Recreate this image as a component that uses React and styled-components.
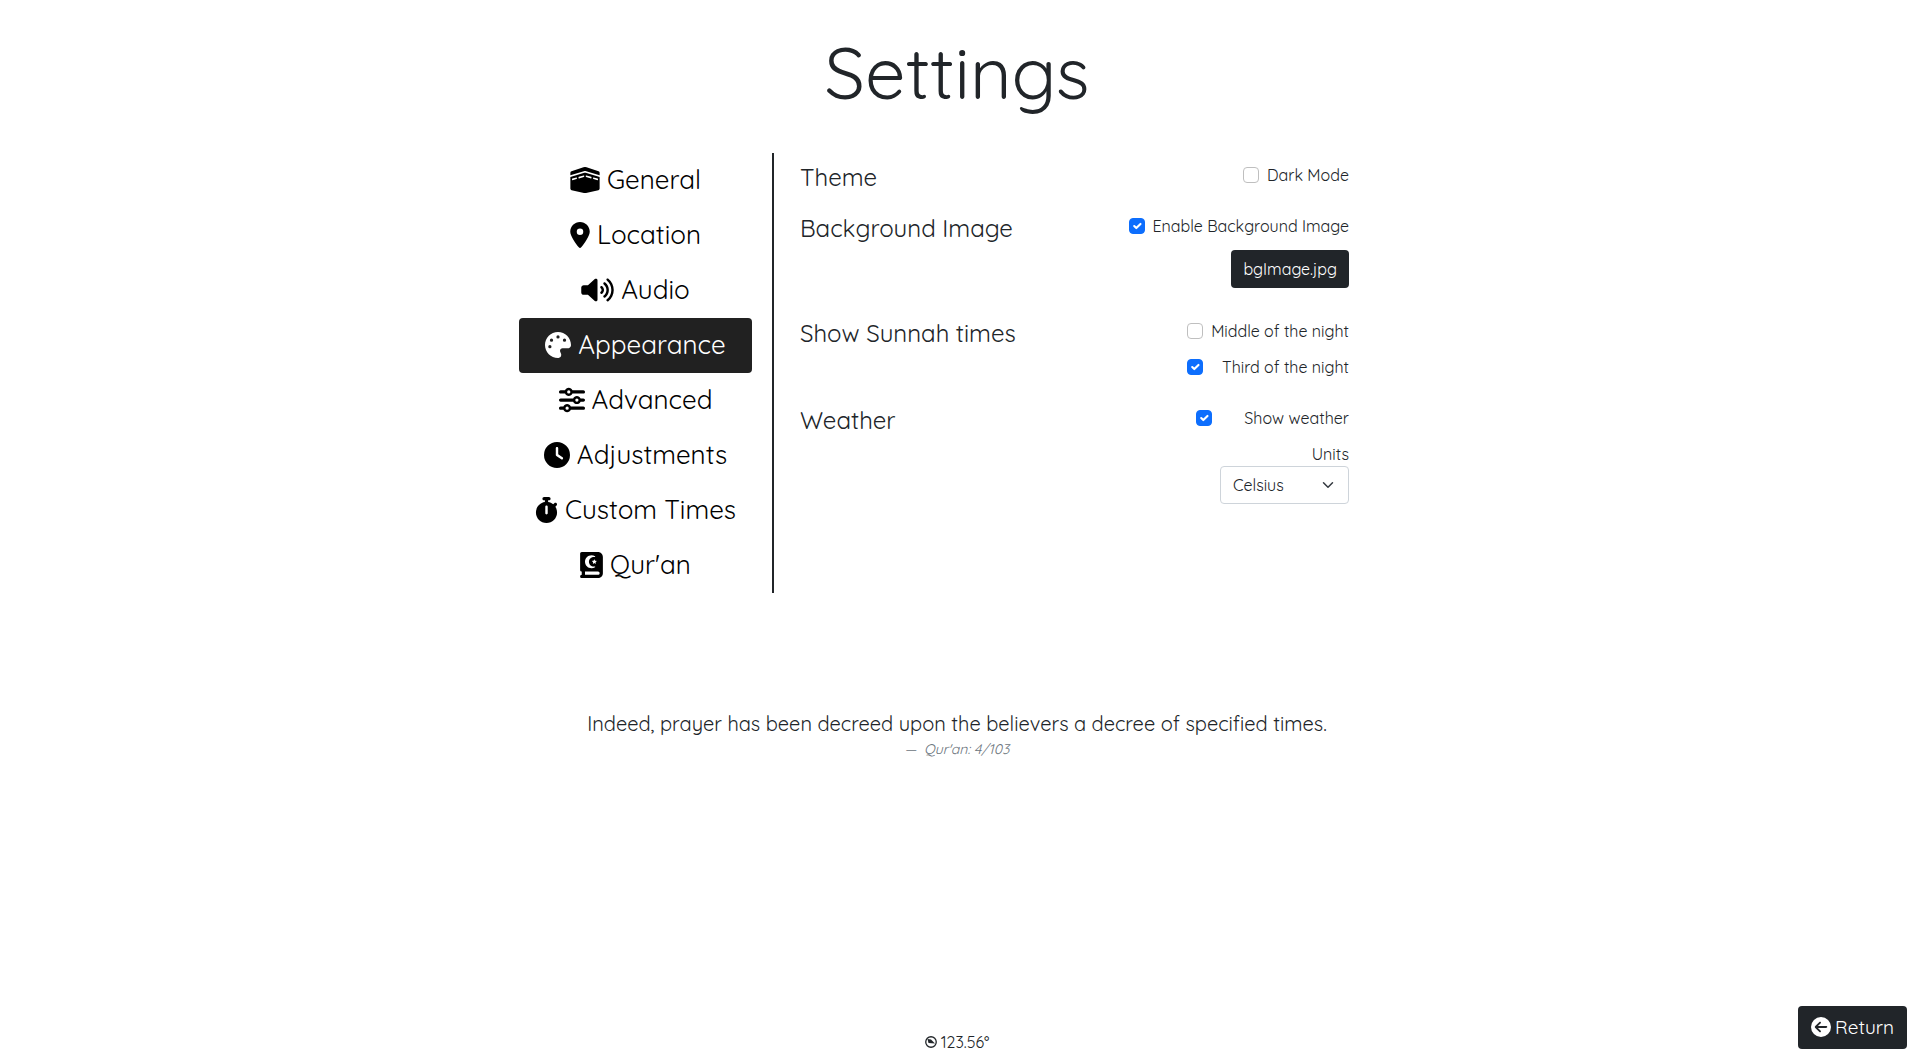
import React, { useState } from "react";
import styled, { createGlobalStyle } from "styled-components";
import { FaKaaba } from "react-icons/fa";
import {
  FaLocationDot,
  FaPalette,
  FaSliders,
  FaClock,
  FaStopwatch,
  FaBookQuran,
  FaCircleArrowLeft,
} from "react-icons/fa6";

const GlobalStyle = createGlobalStyle`
  *, *::before, *::after { box-sizing: border-box; }
  body {
    margin: 0;
    background: #fff;
    color: #212529;
    font-family: Quicksand, Lato, "Liberation Sans", sans-serif;
    font-size: 16px;
    font-weight: 400;
    line-height: 24px;
  }
  button, input, select { font: inherit; }
`;

const Page = styled.div`
  min-height: 100vh;
  display: flex;
  flex-direction: column;
  padding-right: 3px;
`;

const Title = styled.h1`
  margin: 0;
  padding: 30px 0 38px;
  font-size: 72px;
  font-weight: 400;
  line-height: 85px;
  text-align: center;
`;

const Panel = styled.main`
  width: 100%;
  max-width: 876px;
  margin: 0 auto;
  display: flex;
  align-items: stretch;
`;

const Nav = styled.nav`
  flex: 0 0 255px;
  display: flex;
  flex-direction: column;
  padding-right: 20px;
  border-right: 2px solid #212529;
`;

const NavButton = styled.button`
  display: flex;
  align-items: center;
  justify-content: center;
  gap: 7px;
  height: 55px;
  padding: 0 0 1px;
  border: 0;
  border-radius: 4px;
  background: ${(p) => (p.$active ? "#212121" : "transparent")};
  color: ${(p) => (p.$active ? "#fff" : "#000")};
  font-size: 26px;
  cursor: pointer;

  svg { height: 26px; width: ${(p) => p.$iconWidth}; }
`;

const Options = styled.div`
  flex: 1;
  display: flex;
  flex-direction: column;
  gap: 15px;
  padding: 10px 46px 0 26px;
`;

const Row = styled.section`
  display: flex;
  justify-content: space-between;
`;

const RowTitle = styled.h2`
  margin: 0;
  font-size: 24px;
  font-weight: 400;
  line-height: 28px;
`;

const Controls = styled.div`
  display: flex;
  flex-direction: column;
  align-items: flex-end;
`;

const CheckLine = styled.label`
  display: flex;
  align-items: center;
  justify-content: space-between;
  gap: 8px;
  min-width: ${(p) => p.$width || "0"};
  margin-bottom: 12px;
`;

const CheckBox = styled.span`
  display: grid;
  place-items: center;
  width: 16px;
  height: 16px;

  & > * { grid-area: 1 / 1; }
  svg { pointer-events: none; width: 14px; height: 14px; }
`;

const CheckInput = styled.input`
  appearance: none;
  width: 16px;
  height: 16px;
  margin: 0;
  border: 1px solid #bfbfbf;
  border-radius: 4px;
  background: #fff;

  &:checked {
    border-color: #0d6efd;
    background: #0d6efd;
  }
`;

const FileButton = styled.button`
  height: 38px;
  margin-bottom: 16px;
  padding: 0 12px;
  border: 0;
  border-radius: 4px;
  background: #212529;
  color: #fff;
`;

const SelectBox = styled.span`
  display: grid;
  align-items: center;
  width: 129px;

  & > * { grid-area: 1 / 1; }
  svg {
    justify-self: end;
    width: 16px;
    height: 12px;
    margin-right: 13px;
    pointer-events: none;
  }
`;

const UnitSelect = styled.select`
  appearance: none;
  width: 100%;
  height: 38px;
  padding: 0 36px 0 12px;
  border: 1px solid #ced4da;
  border-radius: 4px;
  background: #fff;
  color: #212529;
`;

const Quote = styled.figure`
  margin: 116px 0 0;
  text-align: center;

  blockquote {
    margin: 0;
    font-size: 20px;
    line-height: 30px;
  }
  figcaption {
    color: #6c757d;
    font-size: 14px;
    font-style: italic;
    line-height: 21px;
  }
`;

const Footer = styled.footer`
  display: grid;
  grid-template-columns: 1fr auto 1fr;
  align-items: end;
  margin-top: auto;
  padding: 0 7px;
`;

const Bearing = styled.div`
  grid-column: 2;
  display: flex;
  align-items: center;
  gap: 4px;
  padding-bottom: 5px;

  svg { width: 12px; height: 12px; }
`;

const ReturnButton = styled.button`
  justify-self: end;
  display: flex;
  align-items: center;
  gap: 4px;
  height: 43px;
  margin-bottom: 10px;
  padding: 0 13px 1px;
  border: 0;
  border-radius: 4px;
  background: #212529;
  color: #fff;
  font-size: 19px;

  svg { width: 20px; height: 20px; }
`;

function VolumeIcon() {
  return (
    <svg viewBox="0 0 640 512" fill="currentColor" aria-hidden="true">
      <path d="M412.6 182c-10.28-8.334-25.41-6.867-33.75 3.402c-8.406 10.24-6.906 25.35 3.375 33.74C393.5 228.4 400 241.8 400 255.1c0 14.17-6.5 27.59-17.81 36.83c-10.28 8.396-11.78 23.5-3.375 33.74c4.719 5.806 11.62 8.802 18.56 8.802c5.344 0 10.75-1.779 15.19-5.399C435.1 311.5 448 284.6 448 255.1S435.1 200.4 412.6 182zM473.1 108.2c-10.22-8.334-25.34-6.898-33.78 3.34c-8.406 10.24-6.906 25.35 3.344 33.74C476.6 172.1 496 213.3 496 255.1s-19.44 82.1-53.31 110.7c-10.25 8.396-11.75 23.5-3.344 33.74c4.75 5.775 11.62 8.771 18.56 8.771c5.375 0 10.75-1.779 15.22-5.431C518.2 366.9 544 313 544 255.1S518.2 145 473.1 108.2zM534.4 33.4c-10.22-8.334-25.34-6.867-33.78 3.34c-8.406 10.24-6.906 25.35 3.344 33.74C559.9 116.3 592 183.9 592 255.1s-32.09 139.7-88.06 185.5c-10.25 8.396-11.75 23.5-3.344 33.74C505.3 480.1 512.2 483.1 519.1 483.1c5.375 0 10.75-1.779 15.22-5.431C601.5 423.6 640 342.5 640 255.1S601.5 88.34 534.4 33.4zM301.2 34.98c-11.5-5.181-25.01-3.076-34.43 5.29L131.8 160.1H48c-26.51 0-48 21.48-48 47.96v95.92c0 26.48 21.49 47.96 48 47.96h83.84l134.9 119.8C272.7 477 280.3 479.8 288 479.8c4.438 0 8.959-.9314 13.16-2.835C312.7 471.8 320 460.4 320 447.9V64.12C320 51.55 312.7 40.13 301.2 34.98z" />
    </svg>
  );
}

function BearingIcon() {
  return (
    <svg viewBox="0 0 24 24" aria-hidden="true">
      <circle cx="12" cy="12" r="10.5" fill="none" stroke="currentColor" strokeWidth="2.6" />
      <path d="M5 6L12 7L20 15L7 14Z" fill="currentColor" />
    </svg>
  );
}

const sections = [
  ["General", FaKaaba, "30px"],
  ["Location", FaLocationDot, "20px"],
  ["Audio", VolumeIcon, "33px"],
  ["Appearance", FaPalette, "26px"],
  ["Advanced", FaSliders, "26px"],
  ["Adjustments", FaClock, "26px"],
  ["Custom Times", FaStopwatch, "23px"],
  ["Qur'an", FaBookQuran, "23px"],
];

function Check({ label, initial = false, width }) {
  const [on, setOn] = useState(initial);
  return (
    <CheckLine $width={width}>
      <CheckBox>
        <CheckInput type="checkbox" checked={on} onChange={() => setOn(!on)} />
        {on && (
          <svg viewBox="0 0 20 20" fill="none" stroke="#fff" strokeWidth="3" strokeLinecap="round" strokeLinejoin="round">
            <path d="m6 10 3 3 6-6" />
          </svg>
        )}
      </CheckBox>
      {label}
    </CheckLine>
  );
}

export default function App() {
  const [current, setCurrent] = useState("Appearance");
  return (
    <Page>
      <GlobalStyle />
      <Title>Settings</Title>
      <Panel>
        <Nav>
          {sections.map(([name, Icon, iconWidth]) => (
            <NavButton
              key={name}
              type="button"
              $active={name === current}
              $iconWidth={iconWidth}
              onClick={() => setCurrent(name)}
            >
              <Icon />
              {name}
            </NavButton>
          ))}
        </Nav>
        <Options>
          <Row>
            <RowTitle>Theme</RowTitle>
            <Controls>
              <Check label="Dark Mode" />
            </Controls>
          </Row>
          <Row>
            <RowTitle>Background Image</RowTitle>
            <Controls>
              <Check label="Enable Background Image" initial />
              <FileButton type="button">bgImage.jpg</FileButton>
            </Controls>
          </Row>
          <Row>
            <RowTitle>Show Sunnah times</RowTitle>
            <Controls>
              <Check label="Middle of the night" width="162px" />
              <Check label="Third of the night" width="162px" initial />
            </Controls>
          </Row>
          <Row>
            <RowTitle>Weather</RowTitle>
            <Controls>
              <Check label="Show weather" width="153px" initial />
              <label htmlFor="units">Units</label>
              <SelectBox>
                <UnitSelect id="units" defaultValue="Celsius">
                  <option>Celsius</option>
                  <option>Fahrenheit</option>
                </UnitSelect>
                <svg viewBox="0 0 16 16" fill="none" stroke="#343a40" strokeWidth="2" strokeLinecap="round" strokeLinejoin="round">
                  <path d="m2 5 6 6 6-6" />
                </svg>
              </SelectBox>
            </Controls>
          </Row>
        </Options>
      </Panel>
      <Quote>
        <blockquote>Indeed, prayer has been decreed upon the believers a decree of specified times.</blockquote>
        <figcaption>—&nbsp; Qur'an: 4/103</figcaption>
      </Quote>
      <Footer>
        <Bearing>
          <BearingIcon />
          123.56°
        </Bearing>
        <ReturnButton type="button">
          <FaCircleArrowLeft />
          Return
        </ReturnButton>
      </Footer>
    </Page>
  );
}
